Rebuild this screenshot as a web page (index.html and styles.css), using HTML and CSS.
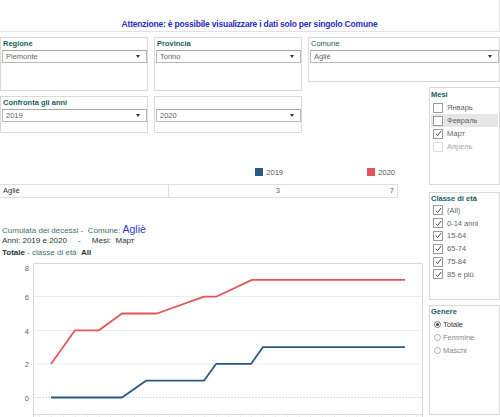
FILE: index.html
```html
<!DOCTYPE html>
<html>
<head>
<meta charset="utf-8">
<link rel="stylesheet" href="styles.css">
</head>
<body>
<div class="dash">
  <div class="header"><span class="title">Attenzione: è possibile visualizzare i dati solo per singolo Comune</span></div>

  <div class="box filter regione">
    <div class="flabel">Regione</div>
    <div class="select"><span>Piemonte</span><i class="caret"></i></div>
  </div>
  <div class="box filter provincia">
    <div class="flabel">Provincia</div>
    <div class="select"><span>Torino</span><i class="caret"></i></div>
  </div>
  <div class="box filter comune">
    <div class="flabel light">Comune</div>
    <div class="select"><span>Agliè</span><i class="caret"></i></div>
  </div>

  <div class="main">
    <div class="compare">
      <div class="box filter">
        <div class="flabel">Confronta gli anni</div>
        <div class="select"><span>2019</span><i class="caret"></i></div>
      </div>
      <div class="box filter">
        <div class="flabel"></div>
        <div class="select"><span>2020</span><i class="caret"></i></div>
      </div>
    </div>

    <div class="legend">
      <div class="lg lg1"><span class="sw blue"></span><span>2019</span></div>
      <div class="lg lg2"><span class="sw red"></span><span>2020</span></div>
    </div>

    <div class="table">
      <div class="cell name">Agliè</div>
      <div class="cell num">3</div>
      <div class="cell num">7</div>
    </div>

    <div class="caption">
      <div class="cline"><span class="teal">Cumulata dei decessi -  Comune: </span><span class="big">Agliè</span></div>
      <div class="cline dark">Anni: 2019 e 2020     -     Mesi:  Март</div>
      <div class="cline"><b class="dark">Totale</b><span class="teal"> - classe di età  </span><b class="dark">All</b></div>
    </div>

    <svg class="chart" width="423" height="154" viewBox="0 0 423 154">
      <g class="grid">
        <line x1="33" y1="33.5" x2="423" y2="33.5"/>
        <line x1="33" y1="67.5" x2="423" y2="67.5"/>
        <line x1="33" y1="101" x2="423" y2="101"/>
      </g>
      <line class="zero" x1="33" y1="134.5" x2="423" y2="134.5"/>
      <g class="frame">
        <line x1="33" y1="0.5" x2="423" y2="0.5"/>
        <line x1="33.5" y1="0" x2="33.5" y2="154"/>
        <line x1="422.5" y1="0" x2="422.5" y2="154"/>
        <line x1="33" y1="151.5" x2="423" y2="151.5"/>
      </g>
      <g class="ticks">
        <line x1="39.5" y1="152" x2="39.5" y2="154"/>
        <line x1="51.5" y1="152" x2="51.5" y2="154"/>
        <line x1="63.5" y1="152" x2="63.5" y2="154"/>
        <line x1="75.5" y1="152" x2="75.5" y2="154"/>
        <line x1="87.5" y1="152" x2="87.5" y2="154"/>
        <line x1="99.5" y1="152" x2="99.5" y2="154"/>
        <line x1="110.5" y1="152" x2="110.5" y2="154"/>
        <line x1="122.5" y1="152" x2="122.5" y2="154"/>
        <line x1="134.5" y1="152" x2="134.5" y2="154"/>
        <line x1="146.5" y1="152" x2="146.5" y2="154"/>
        <line x1="157.5" y1="152" x2="157.5" y2="154"/>
        <line x1="169.5" y1="152" x2="169.5" y2="154"/>
        <line x1="181.5" y1="152" x2="181.5" y2="154"/>
        <line x1="193.5" y1="152" x2="193.5" y2="154"/>
        <line x1="204.5" y1="152" x2="204.5" y2="154"/>
        <line x1="216.5" y1="152" x2="216.5" y2="154"/>
        <line x1="228.5" y1="152" x2="228.5" y2="154"/>
        <line x1="240.5" y1="152" x2="240.5" y2="154"/>
        <line x1="251.5" y1="152" x2="251.5" y2="154"/>
        <line x1="263.5" y1="152" x2="263.5" y2="154"/>
        <line x1="275.5" y1="152" x2="275.5" y2="154"/>
        <line x1="287.5" y1="152" x2="287.5" y2="154"/>
        <line x1="299.5" y1="152" x2="299.5" y2="154"/>
        <line x1="310.5" y1="152" x2="310.5" y2="154"/>
        <line x1="322.5" y1="152" x2="322.5" y2="154"/>
        <line x1="334.5" y1="152" x2="334.5" y2="154"/>
        <line x1="346.5" y1="152" x2="346.5" y2="154"/>
        <line x1="357.5" y1="152" x2="357.5" y2="154"/>
        <line x1="369.5" y1="152" x2="369.5" y2="154"/>
        <line x1="381.5" y1="152" x2="381.5" y2="154"/>
        <line x1="393.5" y1="152" x2="393.5" y2="154"/>
        <line x1="405.5" y1="152" x2="405.5" y2="154"/>
        <line x1="416.5" y1="152" x2="416.5" y2="154"/>
      </g>
      <g class="ylab">
        <text x="29" y="8">8</text>
        <text x="29" y="36.5">6</text>
        <text x="29" y="70.5">4</text>
        <text x="29" y="104">2</text>
        <text x="29" y="137.5">0</text>
      </g>
      <polyline class="l2019" points="51,134.5 122,134.5 146,117.7 204,117.7 216,100.9 251,100.9 263,84.1 405,84.1"/>
      <polyline class="l2020" points="51,100.9 75,67.3 99,67.3 122,50.5 157,50.5 204,33.7 216,33.7 252,16.9 405,16.9"/>
    </svg>
  </div>

  <div class="side">
    <div class="box panel mesi">
      <div class="ptitle">Mesi</div>
      <div class="item"><span class="cb"></span><span>Январь</span></div>
      <div class="item hover"><span class="cb"></span><span>Февраль</span></div>
      <div class="item"><span class="cb"><svg width="7" height="7" viewBox="0 0 7 7"><polyline points="0.8,3.6 2.6,5.6 6.2,0.9"/></svg></span><span>Март</span></div>
      <div class="item dim"><span class="cb"></span><span>Апрель</span></div>
    </div>
    <div class="box panel classe">
      <div class="ptitle">Classe di età</div>
      <div class="item"><span class="cb"><svg width="7" height="7" viewBox="0 0 7 7"><polyline points="0.8,3.6 2.6,5.6 6.2,0.9"/></svg></span><span>(All)</span></div>
      <div class="item"><span class="cb"><svg width="7" height="7" viewBox="0 0 7 7"><polyline points="0.8,3.6 2.6,5.6 6.2,0.9"/></svg></span><span>0-14 anni</span></div>
      <div class="item"><span class="cb"><svg width="7" height="7" viewBox="0 0 7 7"><polyline points="0.8,3.6 2.6,5.6 6.2,0.9"/></svg></span><span>15-64</span></div>
      <div class="item"><span class="cb"><svg width="7" height="7" viewBox="0 0 7 7"><polyline points="0.8,3.6 2.6,5.6 6.2,0.9"/></svg></span><span>65-74</span></div>
      <div class="item"><span class="cb"><svg width="7" height="7" viewBox="0 0 7 7"><polyline points="0.8,3.6 2.6,5.6 6.2,0.9"/></svg></span><span>75-84</span></div>
      <div class="item"><span class="cb"><svg width="7" height="7" viewBox="0 0 7 7"><polyline points="0.8,3.6 2.6,5.6 6.2,0.9"/></svg></span><span>85 e più</span></div>
    </div>
    <div class="box panel genere">
      <div class="ptitle">Genere</div>
      <div class="item ritem on"><span class="rb"></span><span>Totale</span></div>
      <div class="item ritem"><span class="rb"></span><span>Femmine</span></div>
      <div class="item ritem"><span class="rb"></span><span>Maschi</span></div>
    </div>
  </div>
</div>
</body>
</html>
```

FILE: styles.css
```css
* { box-sizing: border-box; }
body {
  margin: 0;
  background: #fff;
  font-family: "Liberation Sans", Arial, sans-serif;
  color: #555;
}
.dash {
  display: grid;
  grid-template-columns: 148px 148px 115px 71px;
  column-gap: 6px;
  grid-template-rows: 37px 45px 9px auto;
  width: 500px;
  height: 417px;
  overflow: hidden;
}
.header {
  grid-column: 1 / -1;
  grid-row: 1;
  height: 32px;
  border-bottom: 1px solid #e2e2e2;
  border-right: 1px solid #e2e2e2;
  display: flex;
  align-items: flex-end;
  justify-content: center;
  padding-bottom: 2px;
}
.title {
  font-size: 8.5px;
  line-height: 10px;
  font-weight: bold;
  color: #2b2bb8;
  letter-spacing: -0.2px;
}
.box {
  border: 1px solid #d9d9d9;
  background: #fff;
}
.filter { padding: 0 0 0 1px; }
.regione { grid-column: 1; grid-row: 2 / 4; }
.provincia { grid-column: 2; grid-row: 2 / 4; }
.comune { grid-column: 3 / 5; grid-row: 2; }
.flabel {
  height: 12px;
  line-height: 12px;
  font-size: 7.5px;
  font-weight: bold;
  color: #225c5e;
  padding-left: 1px;
}
.flabel.light { font-weight: normal; color: #1d5a50; }
.select {
  height: 13px;
  border: 1px solid #b9b9b9;
  border-top-color: #a8a8a8;
  display: flex;
  align-items: center;
  justify-content: space-between;
  padding: 0 6px 0 3px;
  font-size: 7.5px;
  color: #666;
  background: #fff;
}
.caret {
  width: 0;
  height: 0;
  border-left: 2.5px solid transparent;
  border-right: 2.5px solid transparent;
  border-top: 3px solid #333;
}

.main {
  grid-column: 1 / 4;
  grid-row: 4;
  display: flex;
  flex-direction: column;
}
.compare {
  margin-top: 5px;
  display: flex;
  gap: 6px;
  height: 37px;
}
.compare .box { width: 148px; }

.legend {
  margin-top: 34px;
  height: 10px;
  display: grid;
  grid-template-columns: 169px 114px 112px;
  font-size: 7.5px;
  color: #555;
}
.lg { display: flex; align-items: center; gap: 3px; justify-self: end; }
.lg1 { grid-column: 2; }
.lg2 { grid-column: 3; }
.sw { width: 8px; height: 8px; display: block; }
.sw.blue { background: #295887; }
.sw.red { background: #e4545c; }

.table {
  margin-top: 7px;
  width: 398px;
  height: 14px;
  border-top: 1px solid #dedede;
  border-bottom: 1px solid #dedede;
  border-right: 1px solid #dedede;
  display: grid;
  grid-template-columns: 169px 114px 1fr;
  font-size: 7.5px;
  line-height: 12px;
}
.cell { padding: 0 3px; }
.cell.name { border-right: 1px solid #dedede; color: #333; }
.cell.num { text-align: right; color: #666; }

.caption { margin-top: 25px; }
.cline {
  height: 12px;
  line-height: 12px;
  font-size: 8px;
  white-space: pre;
  padding-left: 2px;
}
.teal { color: #3b7070; }
.dark { color: #1e3434; }
.big { font-size: 10.5px; color: #3535c4; }

.chart { display: block; margin-top: 4px; }
.chart .grid line { stroke: #ececec; stroke-width: 1; }
.chart .zero { stroke: #dcdcdc; stroke-width: 1; stroke-dasharray: 2 1; }
.chart .frame line { stroke: #d6d6d6; stroke-width: 1; }
.chart .ticks line { stroke: #ececec; stroke-width: 1; }
.chart .ylab text { font-size: 7.5px; fill: #666; text-anchor: end; font-family: "Liberation Sans", Arial, sans-serif; }
.chart polyline { fill: none; stroke-width: 1.8; stroke-linejoin: round; }
.l2019 { stroke: #295887; }
.l2020 { stroke: #e4545c; }

.side {
  grid-column: 4;
  grid-row: 3 / 5;
  margin-top: 5px;
  display: flex;
  flex-direction: column;
}
.panel { padding: 0 1px; }
.mesi { height: 98px; }
.classe { height: 108px; margin-top: 7px; }
.genere { height: 110px; margin-top: 5px; }
.ptitle {
  font-size: 7.5px;
  font-weight: bold;
  color: #225c5e;
  height: 13px;
  line-height: 13px;
}
.classe .ptitle { height: 11px; line-height: 11px; }
.genere .ptitle { height: 12px; line-height: 12px; }
.item {
  height: 13px;
  display: flex;
  align-items: center;
  font-size: 7.5px;
  color: #666;
  padding-left: 2px;
}
.classe .item { height: 12.8px; }
.item.hover { background: #e6e6e6; }
.item.dim { color: #aaa; }
.cb {
  width: 10px;
  height: 10px;
  border: 1px solid #9a9a9a;
  background: #fff;
  margin-right: 4px;
  display: flex;
  align-items: center;
  justify-content: center;
  flex: none;
}
.item.dim .cb { border-color: #dcdcdc; }
.cb svg polyline { fill: none; stroke: #444; stroke-width: 1; }
.rb {
  width: 7px;
  height: 7px;
  border-radius: 50%;
  border: 1px solid #b0b0b0;
  margin-right: 2px;
  margin-left: 1px;
  flex: none;
  display: flex;
  align-items: center;
  justify-content: center;
}
.ritem.on .rb { border-color: #777; }
.ritem.on .rb::after {
  content: "";
  width: 3px;
  height: 3px;
  border-radius: 50%;
  background: #444;
}
.ritem { color: #888; }
.ritem.on { color: #333; }
```
